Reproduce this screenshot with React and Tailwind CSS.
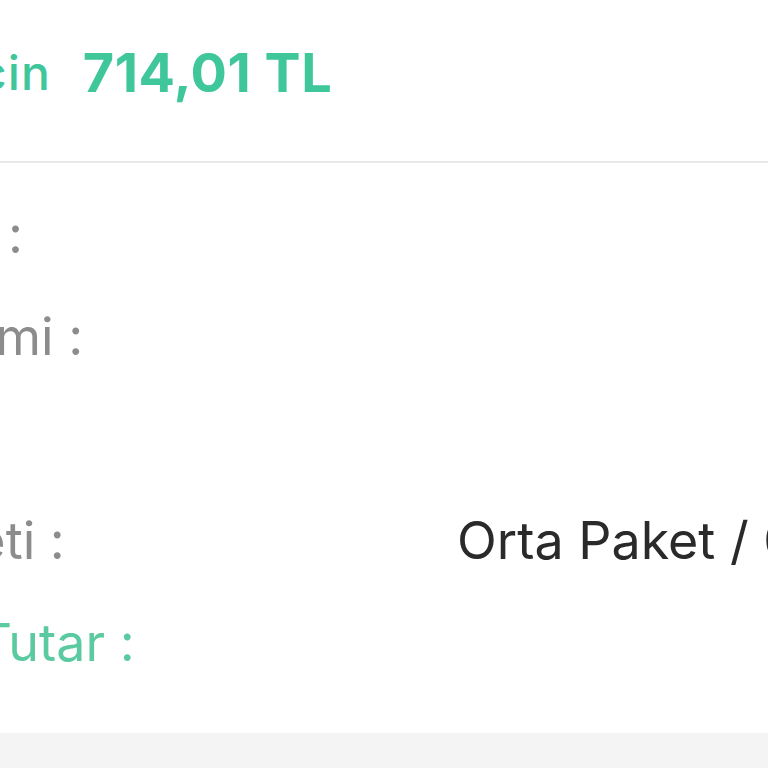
import React from "react";

const font = { fontFamily: "Inter, 'Noto Sans', sans-serif" };

function Row({ label, labelClass, ml, value }) {
  return (
    <div className="flex h-[102px] items-center whitespace-nowrap">
      <div className="w-[457px] shrink-0 overflow-hidden">
        <span className={`block ${ml} ${labelClass}`}>{label}</span>
      </div>
      {value ? (
        <span className="text-[52px] leading-[102px] text-[#2a2a2a]">{value}</span>
      ) : null}
    </div>
  );
}

export default function App() {
  return (
    <div className="w-[768px] h-[768px] overflow-hidden bg-white flex flex-col" style={font}>
      <div className="h-[161px] pb-[16px] flex items-center whitespace-nowrap overflow-hidden">
        <span className="-ml-[34px] text-[48px] font-medium tracking-[1px] text-[#3fc79b]">için</span>
        <span className="ml-[32px] text-[54px] font-bold tracking-[0.5px] text-[#3fc79b]">714,01 TL</span>
      </div>
      <div className="h-[2px] bg-[#e8e8e8]" />
      <div className="pt-[21px] flex flex-col text-[52px] leading-[102px]">
        <Row label="Alıcı :" ml="-ml-[110px]" labelClass="text-[#8c8c8c]" />
        <Row label="Ödeme Yöntemi :" ml="-ml-[337px]" labelClass="text-[#8c8c8c]" />
        <Row label="" ml="" labelClass="text-[#8c8c8c]" />
        <Row label="Kargo Paketi :" ml="-ml-[275px]" labelClass="text-[#8c8c8c]" value="Orta Paket / 0-5 Desi" />
        <Row label="Toplam Tutar :" ml="-ml-[216px]" labelClass="text-[#5ccaa0]" />
      </div>
      <div className="flex-1" />
      <div className="h-[35px] bg-[#f4f4f4]" />
    </div>
  );
}
